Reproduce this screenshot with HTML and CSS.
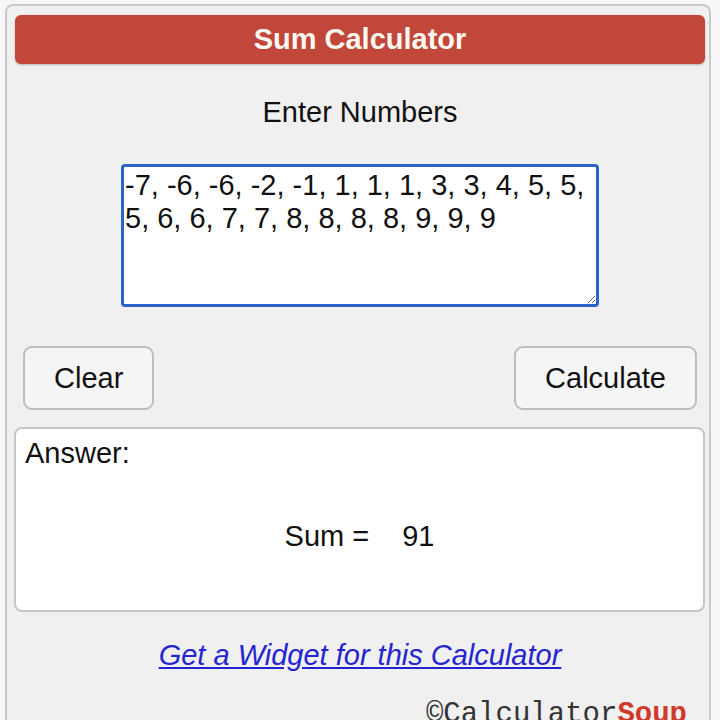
FILE: index.html
```html
<!DOCTYPE html>
<html lang="en">
  <head>
    <meta charset="UTF-8" />
    <meta name="viewport" content="width=device-width, initial-scale=1.0" />
    <title>Sum Calculator</title>
    <link rel="stylesheet" href="styles.css">
  </head>
  <body>
    <div class="calc">
      <h1 class="title">Sum Calculator</h1>
      <div class="label">Enter Numbers</div>
      <textarea class="numbers">-7, -6, -6, -2, -1, 1, 1, 1, 3, 3, 4, 5, 5, 5, 6, 6, 7, 7, 8, 8, 8, 8, 9, 9, 9</textarea>
      <div class="buttons">
        <button class="btn">Clear</button>
        <button class="btn">Calculate</button>
      </div>
      <div class="answer">
        <div class="answer-label">Answer:</div>
        <div class="result">Sum =<span class="value">91</span></div>
      </div>
      <div class="widget"><a href="#">Get a Widget for this Calculator</a></div>
      <div class="brand">©Calculator<span class="soup">Soup</span></div>
    </div>
  </body>
</html>
```

FILE: styles.css
```css
body {
  font-family: "Liberation Sans", Arial, sans-serif;
  background: #f7f7f7;
  margin: 0;
  padding: 0;
  color: #111;
  overflow: hidden;
}
.calc {
  width: 706px;
  box-sizing: border-box;
  margin: 4px 0 0 5px;
  padding: 0 4px 0 8px;
  background: #f0f0f0;
  border: 2px solid #c9c9c9;
  border-radius: 8px;
  height: 740px;
}
.title {
  margin: 9px 0 0;
  height: 49px;
  line-height: 49px;
  background: #c0473a;
  color: #fff8f0;
  font-size: 29px;
  font-weight: bold;
  text-align: center;
  border-radius: 6px;
  box-shadow: 0 1px 2px rgba(0, 0, 0, 0.25);
}
.label {
  margin-top: 31px;
  font-size: 29px;
  line-height: 34px;
  text-align: center;
}
.numbers {
  display: block;
  margin: 35px auto 0;
  width: 478px;
  height: 143px;
  box-sizing: border-box;
  padding: 2px 1px;
  border: 3px solid #2a64c6;
  border-radius: 4px;
  font-family: "Liberation Sans", Arial, sans-serif;
  font-size: 29px;
  line-height: 33px;
  color: #111;
  background: #fff;
  resize: both;
  overflow: hidden;
  outline: none;
}
.buttons {
  display: flex;
  justify-content: space-between;
  margin-top: 39px;
  padding: 0 8px;
}
.btn {
  height: 64px;
  padding: 0 29px;
  font-family: "Liberation Sans", Arial, sans-serif;
  font-size: 29px;
  color: #111;
  background: #f5f5f5;
  border: 2px solid #bdbdbd;
  border-radius: 9px;
}
.answer {
  margin-top: 17px;
  margin-left: -1px;
  height: 185px;
  box-sizing: border-box;
  padding: 7px 9px 0;
  background: #fff;
  border: 2px solid #c6c6c6;
  border-radius: 8px;
}
.answer-label {
  font-size: 29px;
  line-height: 34px;
}
.result {
  margin-top: 49px;
  font-size: 29px;
  line-height: 34px;
  text-align: center;
}
.value {
  margin-left: 33px;
}
.widget {
  margin-top: 26px;
  font-size: 29px;
  line-height: 34px;
  text-align: center;
  font-style: italic;
}
.widget a {
  color: #2424d0;
}
.brand {
  margin-top: 26px;
  padding-right: 18px;
  font-family: "Liberation Mono", "Courier New", monospace;
  font-size: 29px;
  line-height: 34px;
  text-align: right;
  color: #333;
}
.soup {
  color: #d0392b;
  font-weight: bold;
}
```
